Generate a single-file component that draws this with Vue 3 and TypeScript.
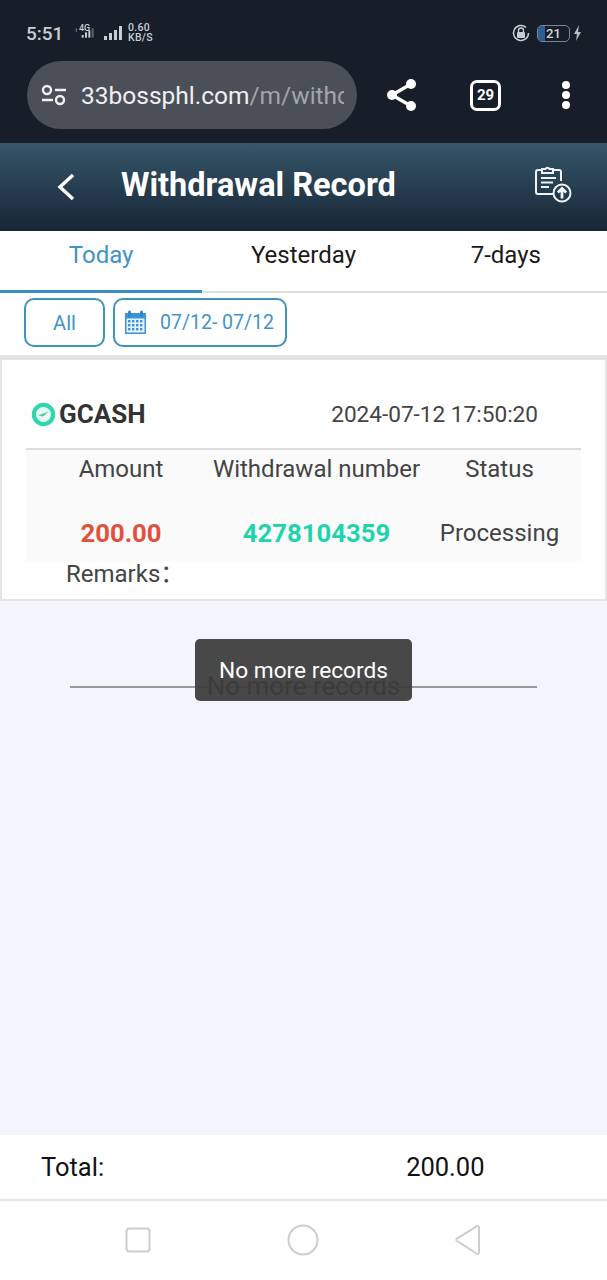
<template>
  <div class="screen">
    <div class="browser">
      <div class="status">
        <div class="status-left">
          <span class="clock">5:51</span>
          <svg class="signal" width="42" height="18" viewBox="0 0 42 18">
            <rect x="10" y="12" width="3" height="4" fill="#c9ccd1" />
            <rect x="15" y="8" width="3" height="8" fill="#c9ccd1" />
            <rect x="20" y="5" width="3" height="11" fill="#c9ccd1" />
            <rect x="25" y="2" width="3" height="14" fill="#5f646c" />
            <rect x="1" y="2" width="2" height="5" fill="#6d7279" />
          </svg>
          <span class="fourg">4G</span>
          <svg class="signal2" width="20" height="16" viewBox="0 0 20 16">
            <rect x="1" y="11" width="3" height="4" fill="#c9ccd1" />
            <rect x="6" y="8" width="3" height="7" fill="#c9ccd1" />
            <rect x="11" y="5" width="3" height="10" fill="#c9ccd1" />
            <rect x="16" y="1" width="3" height="14" fill="#c9ccd1" />
          </svg>
          <span class="speed">0.60<br />KB/S</span>
        </div>
        <div class="status-right">
          <svg width="20" height="20" viewBox="0 0 20 20" fill="none">
            <path d="M17.5 10a7.5 7.5 0 1 1-2.4-5.5" stroke="#c9ccd1" stroke-width="1.5" />
            <rect x="6" y="9" width="8" height="6" rx="1" fill="#c9ccd1" />
            <path d="M7.5 9V7.5a2.5 2.5 0 0 1 5 0V9" stroke="#c9ccd1" stroke-width="1.4" />
          </svg>
          <span class="battery"><i class="battery-fill"></i><b>21</b></span>
          <svg class="bolt" width="9" height="18" viewBox="0 0 9 18">
            <path d="M6 1 1 10h3l-1 7 5-9H5z" fill="#b9bcc2" />
          </svg>
        </div>
      </div>
      <div class="urlrow">
        <div class="urlbar">
          <svg width="28" height="24" viewBox="0 0 28 24" fill="none" stroke="#eef0f2" stroke-width="2.4">
            <circle cx="7" cy="7" r="4" />
            <path d="M15 7h11M2 17h11" />
            <circle cx="20" cy="17" r="4" />
          </svg>
          <span class="url"><em>33bossphl.com</em>/m/withc</span>
        </div>
        <svg class="share" width="36" height="36" viewBox="0 0 36 36" fill="none">
          <path d="M27 7 8 18l19 11" stroke="#fff" stroke-width="3.4" />
          <circle cx="27" cy="7" r="5" fill="#fff" />
          <circle cx="8" cy="18" r="5" fill="#fff" />
          <circle cx="27" cy="29" r="5" fill="#fff" />
        </svg>
        <span class="tabcount">29</span>
        <span class="dots"><i></i><i></i><i></i></span>
      </div>
    </div>

    <header class="titlebar">
      <svg class="back" width="20" height="30" viewBox="0 0 20 30" fill="none">
        <path d="M17 3 4 15l13 12" stroke="#fff" stroke-width="3.4" />
      </svg>
      <h1>Withdrawal Record</h1>
      <svg class="upload" width="38" height="38" viewBox="0 0 38 38" fill="none" stroke="#eef2f4" stroke-width="2">
        <path d="M20 29H4a2 2 0 0 1-2-2V7a2 2 0 0 1 2-2h4M19 5h6a2 2 0 0 1 2 2v9" />
        <path d="M8 8V4h3.500a2.200 2.200 0 0 1 4 0H19v4z" />
        <path d="M7 13h15M7 17.500h12M7 22h8" stroke-width="2.200" />
        <circle cx="28" cy="28" r="8.500" />
        <path d="M28 33.500v-10M23.800 27.500 28 23.500l4.200 4" stroke-width="2.800" />
      </svg>
    </header>

    <nav class="tabs">
      <span v-for="(t, i) in tabs" :key="t" class="tab" :class="{ active: i === 0 }">{{ t }}</span>
    </nav>

    <div class="filters">
      <button class="chip all">All</button>
      <button class="chip date">
        <svg width="23" height="25" viewBox="0 0 23 25">
          <rect x="1" y="3" width="21" height="21" fill="#3c94d6" />
          <rect x="2.500" y="8.500" width="18" height="14" fill="#e6f2fb" />
          <rect x="4" y="0.500" width="3" height="6" rx="1.500" fill="#2f86c8" />
          <rect x="16" y="0.500" width="3" height="6" rx="1.500" fill="#2f86c8" />
          <g fill="#3c94d6">
            <rect v-for="c in cells" :key="c.k" :x="c.x" :y="c.y" width="2.400" height="2.400" />
          </g>
        </svg>
        <span>07/12- 07/12</span>
      </button>
    </div>

    <main class="list">
      <section class="card">
        <div class="card-head">
          <div class="brand">
            <svg width="25" height="25" viewBox="0 0 25 25">
              <circle cx="12.500" cy="12.500" r="11.700" fill="#2fd6ac" />
              <circle cx="12.500" cy="12.500" r="7.500" fill="#eafaf5" />
              <path d="M7 13.500 17.500 9.500 12 14.500z" fill="#52c9a8" />
            </svg>
            <span>GCASH</span>
          </div>
          <time>2024-07-12 17:50:20</time>
        </div>
        <div class="info">
          <div class="cols labels">
            <span>Amount</span><span>Withdrawal number</span><span>Status</span>
          </div>
          <div class="cols values">
            <strong class="red">200.00</strong>
            <strong class="teal">4278104359</strong>
            <span>Processing</span>
          </div>
        </div>
        <p class="remarks">Remarks：</p>
      </section>

      <div class="nomore">
        <span>No more records</span>
      </div>
      <div class="toast">No more records</div>
    </main>

    <div class="total">
      <span>Total:</span>
      <span class="sum">200.00</span>
    </div>

    <div class="sysnav">
      <svg width="26" height="26" viewBox="0 0 26 26" fill="none" stroke="#cdcdcd" stroke-width="2">
        <rect x="1.500" y="1.500" width="23" height="23" rx="3" />
      </svg>
      <svg width="32" height="32" viewBox="0 0 32 32" fill="none" stroke="#cdcdcd" stroke-width="2">
        <circle cx="16" cy="16" r="14.500" />
      </svg>
      <svg width="28" height="32" viewBox="0 0 28 32" fill="none" stroke="#cdcdcd" stroke-width="2">
        <path d="M25 3.500v25a1.500 1.500 0 0 1-2.500 1L3 17a1.500 1.500 0 0 1 0-2.400L22.500 2.400A1.500 1.500 0 0 1 25 3.500z" />
      </svg>
    </div>
  </div>
</template>

<script setup lang="ts">
const tabs = ['Today', 'Yesterday', '7-days']

// little squares of the calendar icon
const cells: { k: string; x: number; y: number }[] = []
for (let r = 0; r < 3; r++) {
  for (let c = 0; c < 4; c++) {
    cells.push({ k: `${r}-${c}`, x: 4 + c * 4, y: 10 + r * 4 })
  }
}
</script>

<style>
html, body { margin: 0; padding: 0; background: #fff; }
</style>

<style scoped>
.screen {
  width: 607px; height: 1280px; display: flex; flex-direction: column;
  font-family: Roboto, "Liberation Sans", "Noto Sans CJK SC", sans-serif; overflow: hidden; background: #f4f4fc;
}
.browser { background: #181d2a; height: 143px; flex: none; }
.status { display: flex; justify-content: space-between; align-items: center; padding: 21px 25px 0 26px; height: 24px; color: #c9ccd1; }
.status-left, .status-right { display: flex; align-items: center; }
.clock { font-size: 19px; font-weight: 500; width: 40px; }
.signal { margin-left: 9px; width: 28px; }
.fourg { font-size: 9px; margin-left: -24px; margin-top: -11px; width: 22px; font-weight: 500; }
.signal2 { margin-left: 2px; }
.speed { font-size: 10.500px; line-height: 10px; font-weight: 500; margin-left: 5px; letter-spacing: .3px; }
.battery { position: relative; width: 31px; height: 15px; margin-left: 6px; border: 1.500px solid #7d8490; border-radius: 5px; display: flex; align-items: center; justify-content: center; overflow: hidden; }
.battery-fill { position: absolute; left: 0; top: 0; bottom: 0; width: 7px; background: #2f5f92; }
.battery b { position: relative; font-size: 13px; font-weight: 500; color: #d5d7da; }
.bolt { margin-left: 3px; }
.urlrow { display: flex; align-items: center; margin: 16px 0 0 27px; }
.urlbar { width: 330px; height: 68px; background: #4b4f58; border-radius: 34px; display: flex; align-items: center; padding-left: 13px; box-sizing: border-box; overflow: hidden; flex: none; }
.url { font-size: 24.500px; color: #a2a5ab; margin-left: 13px; white-space: nowrap; width: 263px; overflow: hidden; }
.url em { font-style: normal; color: #eef0f2; }
.share { margin-left: 27px; flex: none; }
.tabcount { width: 31px; height: 31px; box-sizing: border-box; border: 3px solid #fff; border-radius: 7px; margin-left: 50px; color: #fff; font-size: 15px; font-weight: 700; display: flex; align-items: center; justify-content: center; flex: none; }
.dots { display: flex; flex-direction: column; gap: 2px; margin-left: 61px; flex: none; }
.dots i { width: 8px; height: 8px; border-radius: 50%; background: #fff; }

.titlebar { height: 88px; flex: none; background: linear-gradient(#36566a, #172636); display: flex; align-items: center; color: #fff; position: relative; box-sizing: border-box; padding: 0 0 4px 56px; }
.titlebar h1 { margin: 0 0 0 46px; font-size: 32.500px; font-weight: 700; }
.back { margin-top: 4px; margin-right: -1px; }
.upload { position: absolute; right: 35px; top: 22px; }

.tabs { height: 62px; flex: none; display: grid; grid-template-columns: repeat(3, 1fr); background: #fff; border-bottom: 2px solid #dedede; box-sizing: border-box; }
.tab { font-size: 24px; display: flex; align-items: center; justify-content: center; color: #1a1a1a; padding-bottom: 13px; box-sizing: border-box; height: 60px; position: relative; }
.tab.active { color: #3f93c9; }
.tab.active::after { content: ""; position: absolute; left: 0; right: 0; bottom: -2px; height: 3px; background: #3a8fc7; }

.filters { height: 62px; flex: none; background: #fff; display: flex; gap: 8px; padding: 5px 0 0 24px; box-sizing: border-box; }
.chip { height: 49px; border: 2px solid #3d93b8; border-radius: 10px; background: #fff; color: #3f93c9; font-family: inherit; font-size: 20px; padding: 0; }
.chip.all { width: 81px; }
.chip.date { width: 174px; display: flex; align-items: center; gap: 13px; padding-left: 9px; box-sizing: border-box; font-size: 19.500px; white-space: nowrap; }

.list { flex: 1; position: relative; }
.card { background: #fff; border: 2px solid #e4e4e4; border-top-width: 5px; height: 246px; box-sizing: border-box; padding: 0 24px; }
.card-head { height: 90px; box-sizing: border-box; display: flex; justify-content: space-between; align-items: center; padding: 20px 43px 0 5px; border-bottom: 2px solid #dcdcdc; }
.brand { display: flex; align-items: center; font-size: 26px; font-weight: 700; color: #333; gap: 3px; }
time { font-size: 22.600px; color: #444; }
.info { background: #fafafa; height: 111px; }
.cols { display: grid; grid-template-columns: 170px 221px 145px; padding-left: 10px; text-align: center; color: #444; font-size: 24px; }
.cols.labels { padding-top: 5px; }
.cols.values { margin-top: 36px; }
.cols > * { white-space: nowrap; }
.cols strong { font-weight: 700; font-size: 25.700px; line-height: 28px; }
.red { color: #e2503c; }
.teal { color: #1fd4ac; }
.remarks { margin: -7px 0 0 40px; font-size: 24px; color: #444; }

.nomore { margin: 85px 70px 0; height: 2px; background: #999; position: relative; display: flex; justify-content: center; }
.nomore span { position: relative; top: -15px; height: 32px; font-size: 26px; line-height: 30px; color: #111; }
.toast { position: absolute; left: 195px; top: 284px; width: 217px; height: 62px; background: rgba(62, 62, 62, .95); border-radius: 5px; color: #fff; font-size: 22.700px; display: flex; align-items: center; justify-content: center; }

.total { height: 66px; flex: none; background: #fff; border-bottom: 2px solid #e6e6e6; box-sizing: border-box; display: flex; align-items: center; font-size: 25.500px; color: #111; padding-left: 41px; }
.sum { margin-left: 302px; }
.sysnav { height: 79px; flex: none; background: #fff; position: relative; display: flex; align-items: center; justify-content: space-between; padding: 0 125px 2px 125px; box-sizing: border-box; }
</style>
